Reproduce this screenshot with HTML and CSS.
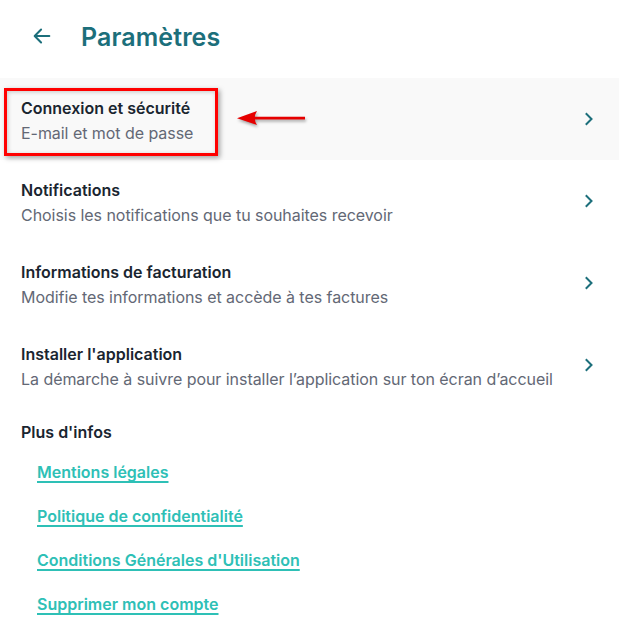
FILE: index.html
```html
<!DOCTYPE html>
<html lang="fr">
<head>
<meta charset="utf-8">
<link rel="stylesheet" href="styles.css">
</head>
<body>
<div class="page">
  <header class="header">
    <svg class="back" width="22" height="22" viewBox="0 0 24 24" fill="none" stroke="currentColor" stroke-width="2.2" stroke-linecap="round" stroke-linejoin="round"><path d="M20 12H4.5M11 5l-7 7 7 7"/></svg>
    <h1 class="title">Paramètres</h1>
  </header>
  <ul class="list">
    <li class="row row-active">
      <div class="texts">
        <div class="row-title">Connexion et sécurité</div>
        <div class="row-sub">E-mail et mot de passe</div>
      </div>
      <svg class="chev" width="10" height="14" viewBox="0 0 10 14" fill="none" stroke="currentColor" stroke-width="2" stroke-linecap="square"><path d="M2.5 2l5 5-5 5"/></svg>
      <div class="annot-box"></div>
      <svg class="annot-arrow" width="80" height="20" viewBox="0 0 80 20"><path d="M14 8.8h56v2.8H14z" fill="#e60000"/><path d="M2 10.2 L22 3 Q17.5 10 22 17 Z" fill="#e60000"/></svg>
    </li>
    <li class="row">
      <div class="texts">
        <div class="row-title">Notifications</div>
        <div class="row-sub">Choisis les notifications que tu souhaites recevoir</div>
      </div>
      <svg class="chev" width="10" height="14" viewBox="0 0 10 14" fill="none" stroke="currentColor" stroke-width="2" stroke-linecap="square"><path d="M2.5 2l5 5-5 5"/></svg>
    </li>
    <li class="row">
      <div class="texts">
        <div class="row-title">Informations de facturation</div>
        <div class="row-sub">Modifie tes informations et accède à tes factures</div>
      </div>
      <svg class="chev" width="10" height="14" viewBox="0 0 10 14" fill="none" stroke="currentColor" stroke-width="2" stroke-linecap="square"><path d="M2.5 2l5 5-5 5"/></svg>
    </li>
    <li class="row">
      <div class="texts">
        <div class="row-title">Installer l'application</div>
        <div class="row-sub">La démarche à suivre pour installer l’application sur ton écran d’accueil</div>
      </div>
      <svg class="chev" width="10" height="14" viewBox="0 0 10 14" fill="none" stroke="currentColor" stroke-width="2" stroke-linecap="square"><path d="M2.5 2l5 5-5 5"/></svg>
    </li>
  </ul>
  <section class="more">
    <h2 class="more-title">Plus d'infos</h2>
    <nav class="links">
      <a class="link" href="#">Mentions légales</a>
      <a class="link" href="#">Politique de confidentialité</a>
      <a class="link" href="#">Conditions Générales d'Utilisation</a>
      <a class="link" href="#">Supprimer mon compte</a>
    </nav>
  </section>
</div>
</body>
</html>
```
FILE: styles.css
```css
* { box-sizing: border-box; }
html, body { margin: 0; padding: 0; background: #fff; }
body {
  font-family: Inter, "Noto Sans", sans-serif;
  color: #1f2a33;
  width: 619px;
  overflow: hidden;
}
.page { display: flex; flex-direction: column; }
.header {
  height: 78px;
  display: flex;
  align-items: center;
  padding-left: 31px;
  color: #1c6f7b;
}
.back { flex: none; margin-top: -6px; }
.title {
  margin: -5px 0 0 28px;
  font-size: 25px;
  font-weight: 600;
  letter-spacing: 0.1px;
}
.list { list-style: none; margin: 0; padding: 0; }
.row {
  position: relative;
  height: 82px;
  display: flex;
  align-items: center;
  padding: 0 25px 0 21px;
}
.row-active { background: #f9f9f9; }
.texts { flex: 1; display: flex; flex-direction: column; gap: 1px; margin-top: 2px; }
.row-title { font-size: 16px; line-height: 24px; font-weight: 600; color: #1a2530; }
.row-sub { font-size: 16px; line-height: 24px; color: #636875; letter-spacing: -0.05px; }
.chev { flex: none; color: #1c6f7b; }
.annot-box {
  position: absolute;
  left: 4px; top: 10px;
  width: 214px; height: 68px;
  border: 3px solid #f00;
  box-shadow: 2px 2px 5px rgba(0,0,0,0.35), inset 1px 1px 4px rgba(0,0,0,0.2);
}
.annot-arrow {
  position: absolute;
  left: 235px; top: 30px;
  filter: drop-shadow(1px 2px 1.5px rgba(0,0,0,0.35));
}
.more { padding: 14px 0 0 21px; }
.more-title { margin: 0; font-size: 16px; line-height: 24px; font-weight: 600; color: #1a2530; }
.links { display: flex; flex-direction: column; padding-left: 16px; padding-top: 16px; gap: 20px; }
.link {
  font-size: 16px;
  line-height: 24px;
  font-weight: 600;
  color: #2ec0b6;
  text-decoration: underline;
  text-underline-offset: 3px;
  text-decoration-thickness: 1.5px;
}
```
